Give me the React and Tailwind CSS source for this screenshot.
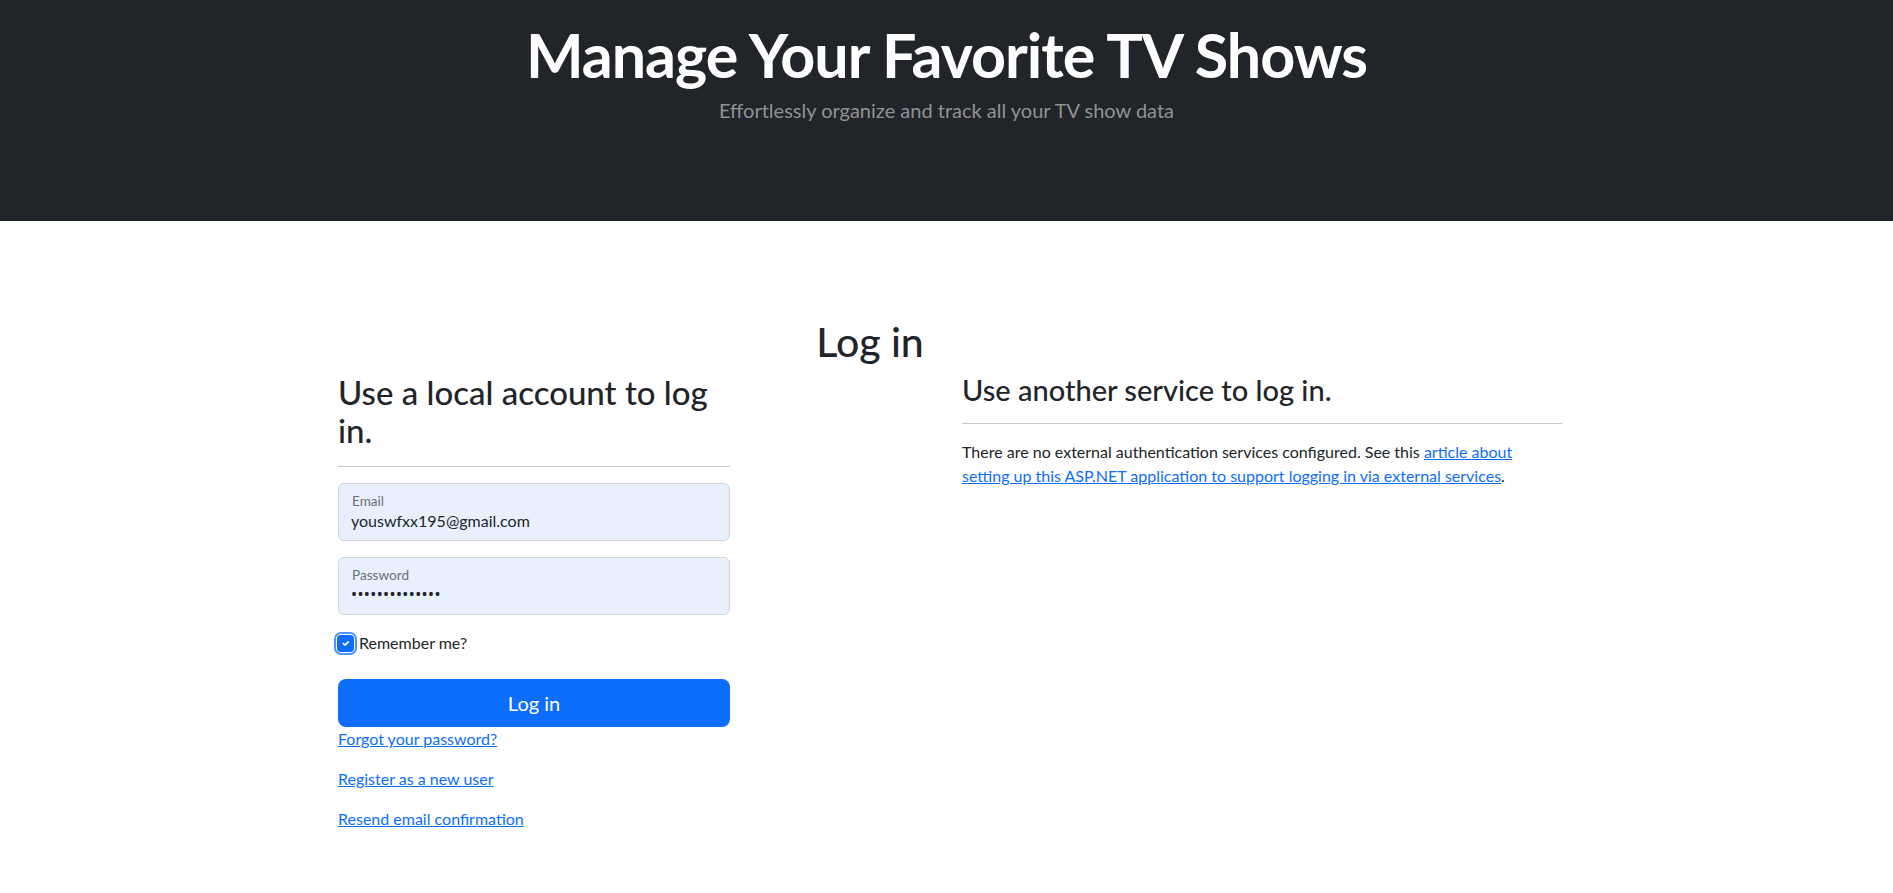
import React from 'react';

function FloatingInput({ label, type, value, inputClass = '' }) {
  return (
    <div className="relative mb-4">
      <input
        type={type}
        defaultValue={value}
        readOnly
        className={`block w-full h-[58px] rounded-[6px] border border-[#ced4da] bg-[#e8f0fe] px-3 pt-[26px] pb-[10px] text-base leading-6 text-[#212529] outline-none ${inputClass}`}
      />
      <label className="absolute left-[14px] top-[8px] text-[13.6px] leading-5 text-[#6c6f72] pointer-events-none">
        {label}
      </label>
    </div>
  );
}

export default function App() {
  return (
    <div className="min-h-screen bg-white text-[#212529] font-['Lato',sans-serif]">
      <header className="h-[221px] bg-[#212529] flex flex-col items-center pt-[19px]">
        <h1 className="text-[61px] leading-[72px] tracking-[-1px] font-bold text-white">Manage Your Favorite TV Shows</h1>
        <p className="mt-[4px] text-[20px] leading-[30px] text-[#909294]">Effortlessly organize and track all your TV show data</p>
      </header>

      <main className="ml-[338px] w-[1224px]">
        <h1 className="w-[1064px] text-center text-[41px] leading-[48px] font-medium mt-[97px] mb-[7px]">Log in</h1>
        <div className="flex">
          <section className="w-[392px]">
            <h2 className="text-[33px] leading-[38px] font-medium">Use a local account to log in.</h2>
            <hr className="mt-[17px] mb-4 border-t border-[#c8c9ca]" />
            <FloatingInput label="Email" type="email" value="youswfxx195@gmail.com" />
            <FloatingInput
              label="Password"
              type="password"
              value="abcdefghijklmn"
              inputClass="font-['Noto_Sans',sans-serif] tracking-[0.4px]"
            />
            <label className="flex items-center gap-[5px] mb-[24px] h-6 text-base">
              <span className="ml-[-1px] flex h-[17px] w-[17px] items-center justify-center rounded-[4px] bg-[#0d6efd] outline-2 outline-offset-[1px] outline-[#4d94ff]">
                <svg viewBox="0 0 20 20" className="h-[11px] w-[11px]" fill="none" stroke="white" strokeWidth="3" strokeLinecap="round" strokeLinejoin="round">
                  <path d="M6 10l3 3l6-6" />
                </svg>
              </span>
              Remember me?
            </label>
            <button className="w-full h-[48px] rounded-[8px] bg-[#0d6efd] text-white text-[20px] leading-[30px]">Log in</button>
            <div className="text-base leading-6">
              <p className="mb-4"><a href="#" className="text-[#0d6efd] underline">Forgot your password?</a></p>
              <p className="mb-4"><a href="#" className="text-[#0d6efd] underline">Register as a new user</a></p>
              <p className="mb-4"><a href="#" className="text-[#0d6efd] underline">Resend email confirmation</a></p>
            </div>
          </section>
          <section className="ml-[232px] w-[600px]">
            <h3 className="text-[29px] leading-[34px] font-medium">Use another service to log in.</h3>
            <hr className="mt-4 mb-4 border-t border-[#c8c9ca]" />
            <p className="text-base leading-6">
              There are no external authentication services configured. See this{' '}
              <a href="#" className="text-[#0d6efd] underline">
                article about setting up this ASP.NET application to support logging in via external services
              </a>
              .
            </p>
          </section>
        </div>
      </main>
    </div>
  );
}
